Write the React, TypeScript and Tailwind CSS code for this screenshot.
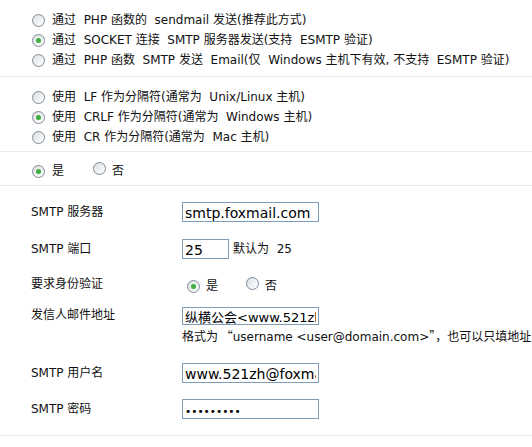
import React from 'react';

const FONT = { fontFamily: '"DejaVu Sans", "Noto Sans CJK SC", sans-serif' };
const CJK = { fontFamily: '"Noto Sans CJK SC", sans-serif' };

const Radio: React.FC<{ checked?: boolean }> = ({ checked }) => (
  <span className="relative inline-flex h-[13px] w-[13px] flex-shrink-0 items-center justify-center rounded-full border border-[#7d8a96] bg-gradient-to-br from-[#dcdfe2] to-white">
    {checked && <span className="h-[5px] w-[5px] rounded-full bg-[#3fae3f]" />}
  </span>
);

const Option: React.FC<{ checked?: boolean; children: React.ReactNode }> = ({ checked, children }) => (
  <div className="flex h-[20px] items-center gap-[7px] pl-[32px]">
    <Radio checked={checked} />
    <span className="whitespace-pre">{children}</span>
  </div>
);

const Field: React.FC<{ label: string; children: React.ReactNode; top?: boolean }> = ({ label, children, top }) => (
  <div className={`flex ${top ? 'items-start' : 'items-center'}`}>
    <div className={`w-[182px] flex-shrink-0 pl-[31px] ${top ? 'leading-[16px]' : ''}`}>{label}</div>
    <div className="min-w-0 flex-1">{children}</div>
  </div>
);

const inputCls =
  'block h-[20px] border border-[#7f9db9] bg-white px-[2px] pt-[2px] leading-[16px] text-black outline-none';

export default function App() {
  return (
    <div className="h-[447px] w-[532px] overflow-hidden bg-white text-[12px] text-[#111]" style={FONT}>
      {/* 发送方式 */}
      <div className="border-b border-[#ececec] pb-[6px] pt-[10px]">
        <Option>通过  PHP 函数的  sendmail 发送(推荐此方式)</Option>
        <Option checked>通过  SOCKET 连接  SMTP 服务器发送(支持  ESMTP 验证)</Option>
        <Option>通过  PHP 函数  SMTP 发送  Email(仅  Windows 主机下有效, 不支持  ESMTP 验证)</Option>
      </div>

      {/* 分隔符 */}
      <div className="border-b border-[#ececec] pb-[4px] pt-[10px]">
        <Option>使用  LF 作为分隔符(通常为  Unix/Linux 主机)</Option>
        <Option checked>使用  CRLF 作为分隔符(通常为  Windows 主机)</Option>
        <Option>使用  CR 作为分隔符(通常为  Mac 主机)</Option>
      </div>

      <div className="border-b border-[#ececec] pb-[4px] pt-[9px]">
        <div className="flex h-[20px] items-center pl-[32px]">
          <Radio checked />
          <span className="ml-[7px]">是</span>
          <span className="ml-[29px]"><Radio /></span>
          <span className="ml-[6px]">否</span>
        </div>
      </div>

      {/* SMTP 设置 */}
      <div className="flex flex-col border-b border-[#ececec] pb-[16px] pt-[16px]">
        <Field label="SMTP 服务器">
          <input readOnly value="smtp.foxmail.com" className={`${inputCls} w-[137px] text-[14px]`} style={FONT} />
        </Field>
        <div className="mt-[17px]">
          <Field label="SMTP 端口">
            <div className="flex items-center gap-[4px]">
              <input readOnly value="25" className={`${inputCls} w-[47px] text-[14px]`} style={FONT} />
              <span className="whitespace-pre">默认为  25</span>
            </div>
          </Field>
        </div>
        <div className="mt-[15px]">
          <Field label="要求身份验证">
            <div className="flex h-[20px] items-center pl-[5px] pt-[4px]">
              <Radio checked />
              <span className="ml-[6px]">是</span>
              <span className="ml-[28px]"><Radio /></span>
              <span className="ml-[6px]">否</span>
            </div>
          </Field>
        </div>
        <div className="mt-[13px]">
          <Field label="发信人邮件地址" top>
            <input
              readOnly
              value="纵横公会<www.521zh@foxmail.com>"
              className={`${inputCls} !h-[18px] w-[137px] !pt-[1px] text-[13px]`}
              style={FONT}
            />
            <div className="mt-[2px] whitespace-nowrap leading-[18px]">
              格式为<span style={CJK}> “</span>username &lt;user@domain.com&gt;<span style={CJK}>”，</span>也可以只填地址
            </div>
          </Field>
        </div>
        <div className="mt-[17px]">
          <Field label="SMTP 用户名">
            <input readOnly value="www.521zh@foxmail.com" className={`${inputCls} w-[137px] text-[14px]`} style={FONT} />
          </Field>
        </div>
        <div className="mt-[16px]">
          <Field label="SMTP 密码">
            <input
              readOnly
              type="password"
              value="123456789"
              className={`${inputCls} w-[137px] text-[10.5px] !pt-[3px]`}
              style={FONT}
            />
          </Field>
        </div>
      </div>
    </div>
  );
}
